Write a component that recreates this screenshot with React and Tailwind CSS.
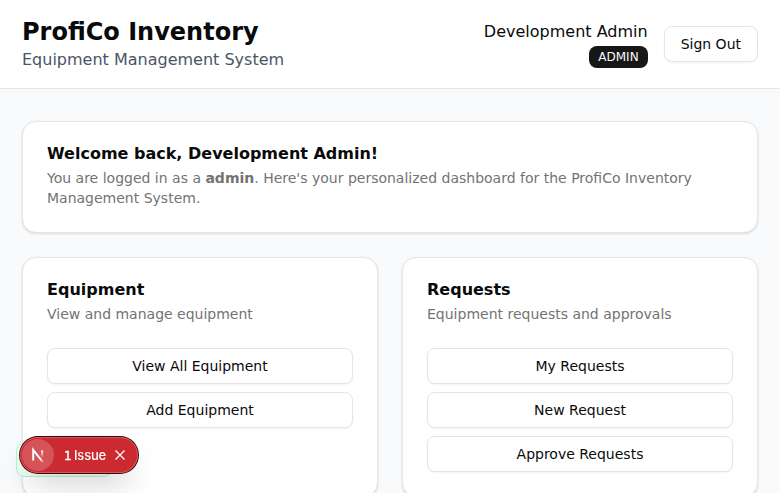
import React from "react";

const FONT = "font-['DejaVu_Sans',sans-serif]";

function Button({ children, className = "" }) {
  return (
    <button
      className={`inline-flex h-9 items-center justify-center rounded-lg border border-[#e5e5e5] bg-white px-4 py-2 text-sm font-medium whitespace-nowrap text-[#0a0a0a] shadow-xs ${className}`}
    >
      {children}
    </button>
  );
}

function Card({ title, description, actions, className = "" }) {
  return (
    <section
      className={`flex flex-col gap-6 rounded-[14px] border border-[#e5e5e5] bg-white py-6 text-[#0a0a0a] shadow-sm ${className}`}
    >
      <div className="grid gap-1.5 px-6">
        <h2 className="leading-none font-semibold">{title}</h2>
        <p className="text-sm text-[#737373]">{description}</p>
      </div>
      {actions && (
        <div className="flex flex-col gap-2 px-6">
          {actions.map((label) => (
            <Button key={label} className="w-full">
              {label}
            </Button>
          ))}
        </div>
      )}
    </section>
  );
}

function NextMark() {
  return (
    <svg className="size-8" viewBox="0 0 32 32" fill="none">
      <defs>
        <linearGradient id="diag" x1="9.95" y1="11.12" x2="15.48" y2="17.97" gradientUnits="userSpaceOnUse">
          <stop stopColor="white" />
          <stop offset="0.604" stopColor="white" stopOpacity="0" />
          <stop offset="1" stopColor="white" stopOpacity="0" />
        </linearGradient>
        <linearGradient id="stem" x1="11.82" y1="1.4" x2="11.79" y2="9.63" gradientUnits="userSpaceOnUse">
          <stop stopColor="white" />
          <stop offset="1" stopColor="white" stopOpacity="0" />
        </linearGradient>
      </defs>
      <g transform="translate(9 10) scale(0.94 0.92)" strokeWidth="2.1">
        <path d="M13.3 15.2 L2.34 1 V12.6" stroke="url(#diag)" />
        <path d="M11.825 1.5 V13.1" stroke="url(#stem)" />
      </g>
    </svg>
  );
}

function IssueBadge() {
  return (
    <div className="fixed bottom-5 left-5 flex h-9 w-[118px] items-center rounded-full bg-[#ca2a30] pl-0.5 text-white shadow-[0_0_0_1px_#171717,inset_0_0_0_1px_rgba(255,90,95,0.7),0_16px_32px_-8px_rgba(0,0,0,0.24)]">
      <div className="flex size-8 items-center justify-center rounded-full bg-white/20">
        <NextMark />
      </div>
      <div className="ml-2.5 flex w-[42px] items-baseline justify-between leading-none font-medium whitespace-nowrap">
        <span className="font-['DejaVu_Sans',sans-serif] text-xs leading-none [-webkit-text-stroke:0.4px_white]">1</span>
        <span className="font-['Inter',sans-serif] text-[13px] leading-none tracking-[-0.2px]">Issue</span>
      </div>
      <svg className="ml-2 size-3" viewBox="0 0 12 12" fill="none" stroke="white" strokeWidth="1.2">
        <path d="M1.5 1.5 L10.5 10.5 M10.5 1.5 L1.5 10.5" />
      </svg>
    </div>
  );
}

export default function App() {
  return (
    <div className={`h-screen overflow-hidden bg-gray-50 text-[#0a0a0a] ${FONT}`}>
      <header className="border-b border-[#e5e5e5] bg-white">
        <div className="mx-auto flex max-w-3xl items-center justify-between px-4 py-4">
          <div>
            <h1 className="text-2xl font-bold">ProfiCo Inventory</h1>
            <p className="text-gray-600">Equipment Management System</p>
          </div>
          <div className="flex items-center gap-4">
            <div className="text-right">
              <p className="font-medium">Development Admin</p>
              <span className="inline-flex items-center justify-center rounded-lg border border-transparent bg-[#171717] px-2 py-0.5 text-xs font-medium text-[#fafafa]">
                ADMIN
              </span>
            </div>
            <Button>Sign Out</Button>
          </div>
        </div>
      </header>

      <main className="mx-auto max-w-3xl px-4 py-8">
        <Card
          className="mb-6"
          title="Welcome back, Development Admin!"
          description={
            <>
              You are logged in as a <strong>admin</strong>. Here's your personalized dashboard for the ProfiCo
              Inventory Management System.
            </>
          }
        />
        <div className="grid grid-cols-2 gap-6">
          <Card
            title="Equipment"
            description="View and manage equipment"
            actions={["View All Equipment", "Add Equipment"]}
          />
          <Card
            title="Requests"
            description="Equipment requests and approvals"
            actions={["My Requests", "New Request", "Approve Requests"]}
          />
        </div>
      </main>

      <div className="fixed bottom-4 left-4 h-[34px] w-24 rounded-lg border border-[#b3f5ca] bg-green-50" />
      <IssueBadge />
    </div>
  );
}
